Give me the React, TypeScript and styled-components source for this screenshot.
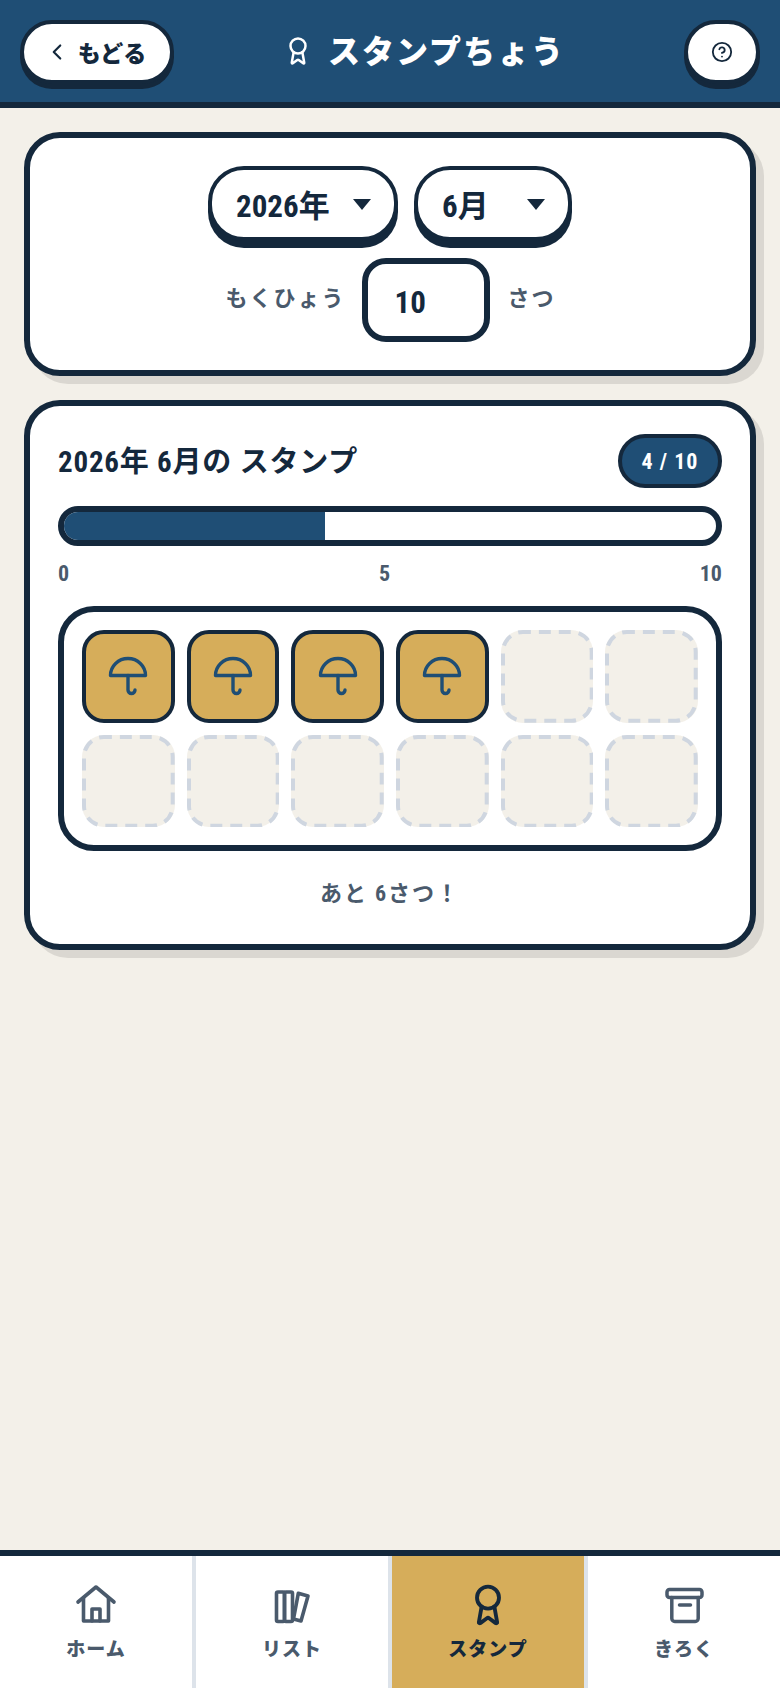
import React from 'react';
import styled, { createGlobalStyle } from 'styled-components';
import { Award, ChevronLeft, CircleHelp } from 'lucide-react';

const navy = '#14283c';
const blue = '#1f4e75';
const gold = '#d6ad5a';
const cream = '#f3f0e9';
const slate = '#4a5a6c';

const GlobalStyle = createGlobalStyle`
  * { box-sizing: border-box; }
  html, body { margin: 0; padding: 0; background: ${cream}; }
  body {
    font-family: Roboto, "Noto Sans CJK JP", sans-serif;
    font-stretch: 75%;
    color: ${navy};
  }
`;

const Page = styled.div`
  width: 780px;
  height: 1688px;
  display: flex;
  flex-direction: column;
  background: ${cream};
`;

const Header = styled.header`
  height: 108px;
  flex: none;
  display: flex;
  align-items: center;
  justify-content: space-between;
  padding: 2px 20px 0;
  background: ${blue};
  border-bottom: 6px solid ${navy};
`;

const BackButton = styled.button`
  width: 154px;
  height: 64px;
  display: flex;
  align-items: center;
  justify-content: center;
  gap: 8px;
  background: #fff;
  border: 4px solid ${navy};
  border-radius: 32px;
  box-shadow: 0 5px 0 ${navy};
  color: ${navy};
  font: 900 23px "Noto Sans CJK JP", sans-serif;
  padding: 0 4px 0 0;
`;

const Title = styled.h1`
  margin: -6px 10px 0 0;
  display: flex;
  align-items: center;
  gap: 15px;
  color: #fff;
  font: 900 32px "Noto Sans CJK JP", sans-serif;
  letter-spacing: 2px;
  & > svg { margin-top: 4px; }
`;

const HelpButton = styled.button`
  width: 76px;
  height: 64px;
  display: flex;
  align-items: center;
  justify-content: center;
  background: #fff;
  border: 4px solid ${navy};
  border-radius: 32px;
  box-shadow: 0 5px 0 ${navy};
  color: ${navy};
  padding: 0;
`;

const Main = styled.main`
  flex: 1;
  display: flex;
  flex-direction: column;
  gap: 24px;
  padding: 24px;
`;

const Card = styled.section`
  background: #fff;
  border: 6px solid ${navy};
  border-radius: 36px;
  box-shadow: 8px 8px 0 rgba(0, 0, 0, 0.1);
`;

const PickerCard = styled(Card)`
  height: 244px;
  padding: 28px 0 0;
  display: flex;
  flex-direction: column;
  align-items: center;
  gap: 17px;
`;

const PickerRow = styled.div`
  display: flex;
  gap: 16px;
`;

const Select = styled.div<{ $width: number }>`
  width: ${p => p.$width}px;
  height: 75px;
  display: flex;
  align-items: center;
  justify-content: space-between;
  padding: 0 23px 0 24px;
  background: #fff;
  border: 4px solid ${navy};
  border-radius: 36px;
  box-shadow: 0 7px 0 ${navy};
  font-size: 31px;
  font-weight: 700;
  white-space: nowrap;
`;

const Caret = styled.span`
  width: 0;
  height: 0;
  border-left: 9px solid transparent;
  border-right: 9px solid transparent;
  border-top: 11px solid ${navy};
  margin-top: 2px;
`;

const GoalRow = styled.div`
  display: flex;
  align-items: center;
  gap: 18px;
  margin-left: 1px;
`;

const GoalLabel = styled.span`
  color: ${slate};
  font-size: 22px;
  font-weight: 700;
  letter-spacing: 2px;
  margin-top: -8px;
  &:first-child { margin-right: -2px; }
`;

const GoalInput = styled.div`
  width: 128px;
  height: 84px;
  display: flex;
  align-items: center;
  padding: 5px 0 0 27px;
  border: 6px solid ${navy};
  border-radius: 24px;
  font-size: 31px;
  font-weight: 700;
`;

const StampCard = styled(Card)`
  height: 550px;
  padding: 28px 28px 0;
  display: flex;
  flex-direction: column;
`;

const StampHead = styled.div`
  display: flex;
  align-items: center;
  justify-content: space-between;
  height: 54px;
`;

const StampTitle = styled.h2`
  margin: -4px 0 0;
  font-size: 29px;
  font-weight: 700;
  letter-spacing: 0.8px;
`;

const Count = styled.span`
  width: 104px;
  height: 54px;
  display: flex;
  align-items: center;
  justify-content: center;
  background: ${blue};
  border: 4px solid ${navy};
  border-radius: 27px;
  color: #fff;
  font-size: 22px;
  font-weight: 700;
  letter-spacing: 1px;
`;

const Track = styled.div`
  height: 40px;
  margin-top: 18px;
  background: #fff;
  border: 6px solid ${navy};
  border-radius: 20px;
  overflow: hidden;
`;

const Fill = styled.div`
  height: 100%;
  background: ${blue};
`;

const Scale = styled.div`
  display: flex;
  justify-content: space-between;
  margin-top: 13px;
  height: 30px;
  line-height: 30px;
  color: ${slate};
  font-size: 22px;
  font-weight: 700;
`;

const StampBox = styled.div`
  margin-top: 17px;
  padding: 18px;
  display: grid;
  grid-template-columns: repeat(6, 1fr);
  gap: 12px;
  border: 6px solid ${navy};
  border-radius: 36px;
`;

const FilledStamp = styled.div`
  aspect-ratio: 1;
  display: flex;
  align-items: center;
  justify-content: center;
  border-radius: 22px;
  background: ${gold};
  border: 4px solid ${navy};
  color: ${blue};
`;

const EmptyStamp = styled.div`
  aspect-ratio: 1;
  position: relative;
  border-radius: 22px;
  background: ${cream};
`;

const DashRing = styled.svg`
  position: absolute;
  inset: 0;
  width: 100%;
  height: 100%;
`;

const Remaining = styled.p`
  margin: 24px 0 0;
  text-align: center;
  color: ${slate};
  font-size: 22px;
  font-weight: 700;
  letter-spacing: 2px;
`;

const Nav = styled.nav`
  height: 138px;
  flex: none;
  display: flex;
  background: #fff;
  border-top: 6px solid ${navy};
`;

const NavItem = styled.div<{ $active?: boolean }>`
  flex: 0 0 196px;
  display: flex;
  flex-direction: column;
  align-items: center;
  padding-top: 27px;
  gap: 7px;
  background: ${p => (p.$active ? gold : '#fff')};
  color: ${p => (p.$active ? navy : slate)};
  font: 900 19px "Noto Sans CJK JP", sans-serif;
  letter-spacing: 1px;
  border-right: 4px solid #dde3ea;
  &:last-child { flex-basis: 192px; border-right: 0; }
`;

const UmbrellaIcon = () => (
  <svg width="40" height="40" viewBox="0 0 40 40" fill="none" stroke="currentColor" strokeWidth="3.4" strokeLinecap="round" strokeLinejoin="round">
    <path d="M2.5 19.5a17.5 17 0 0 1 35 0Z" />
    <path d="M20 19.5V34a3.5 3.5 0 0 0 7 0" />
  </svg>
);

const HomeIcon = () => (
  <svg width="44" height="44" viewBox="0 0 44 44" fill="none" stroke="currentColor" strokeWidth="3.6" strokeLinecap="round" strokeLinejoin="round">
    <path d="M4 19 22 4l18 15" />
    <path d="M9.5 15v23h25V15" />
    <path d="M18 38V26h8v12" />
  </svg>
);

const BooksIcon = () => (
  <svg width="44" height="44" viewBox="0 0 44 44" fill="none" stroke="currentColor" strokeWidth="3.6" strokeLinecap="round" strokeLinejoin="round">
    <rect x="6.5" y="9" width="8" height="29.5" rx="1.5" />
    <rect x="14.5" y="9" width="8" height="29.5" rx="1.5" />
    <path d="M28.3 10.3 38 13l-7 25-7.5-2z" />
  </svg>
);

const BoxIcon = () => (
  <svg width="44" height="44" viewBox="0 0 44 44" fill="none" stroke="currentColor" strokeWidth="3.5" strokeLinecap="round" strokeLinejoin="round">
    <rect x="5" y="6.5" width="35" height="8" rx="2.5" />
    <path d="M9.8 14.5v21a3 3 0 0 0 3 3h20.4a3 3 0 0 0 3-3v-21" />
    <path d="M17.5 22h11" />
  </svg>
);

const tabs = [
  { label: 'ホーム', icon: <HomeIcon /> },
  { label: 'リスト', icon: <BooksIcon /> },
  { label: 'スタンプ', icon: <Award size={44} strokeWidth={2.1} />, active: true },
  { label: 'きろく', icon: <BoxIcon /> },
];

const goal = 10;
const got = 4;

export default function App() {
  return (
    <Page>
      <GlobalStyle />
      <Header>
        <BackButton><ChevronLeft size={26} />もどる</BackButton>
        <Title><Award size={30} strokeWidth={2} />スタンプちょう</Title>
        <HelpButton><CircleHelp size={22} /></HelpButton>
      </Header>
      <Main>
        <PickerCard>
          <PickerRow>
            <Select $width={190}>2026年<Caret /></Select>
            <Select $width={158}>6月<Caret /></Select>
          </PickerRow>
          <GoalRow>
            <GoalLabel>もくひょう</GoalLabel>
            <GoalInput>10</GoalInput>
            <GoalLabel>さつ</GoalLabel>
          </GoalRow>
        </PickerCard>
        <StampCard>
          <StampHead>
            <StampTitle>2026年 6月の スタンプ</StampTitle>
            <Count>{got} / {goal}</Count>
          </StampHead>
          <Track><Fill style={{ width: `${(got / goal) * 100}%` }} /></Track>
          <Scale><span>0</span><span>5</span><span>10</span></Scale>
          <StampBox>
            {Array.from({ length: goal + 2 }, (_, i) =>
              i < got ? (
                <FilledStamp key={i}><UmbrellaIcon /></FilledStamp>
              ) : (
                <EmptyStamp key={i}>
                  <DashRing viewBox="0 0 93 93" fill="none">
                    <rect x="2" y="2" width="89" height="89" rx="20" stroke="#cfd6e0" strokeWidth="4" strokeDasharray="12 8" strokeDashoffset="4" />
                  </DashRing>
                </EmptyStamp>
              )
            )}
          </StampBox>
          <Remaining>あと 6さつ！</Remaining>
        </StampCard>
      </Main>
      <Nav>
        {tabs.map(t => (
          <NavItem key={t.label} $active={t.active}>{t.icon}{t.label}</NavItem>
        ))}
      </Nav>
    </Page>
  );
}
